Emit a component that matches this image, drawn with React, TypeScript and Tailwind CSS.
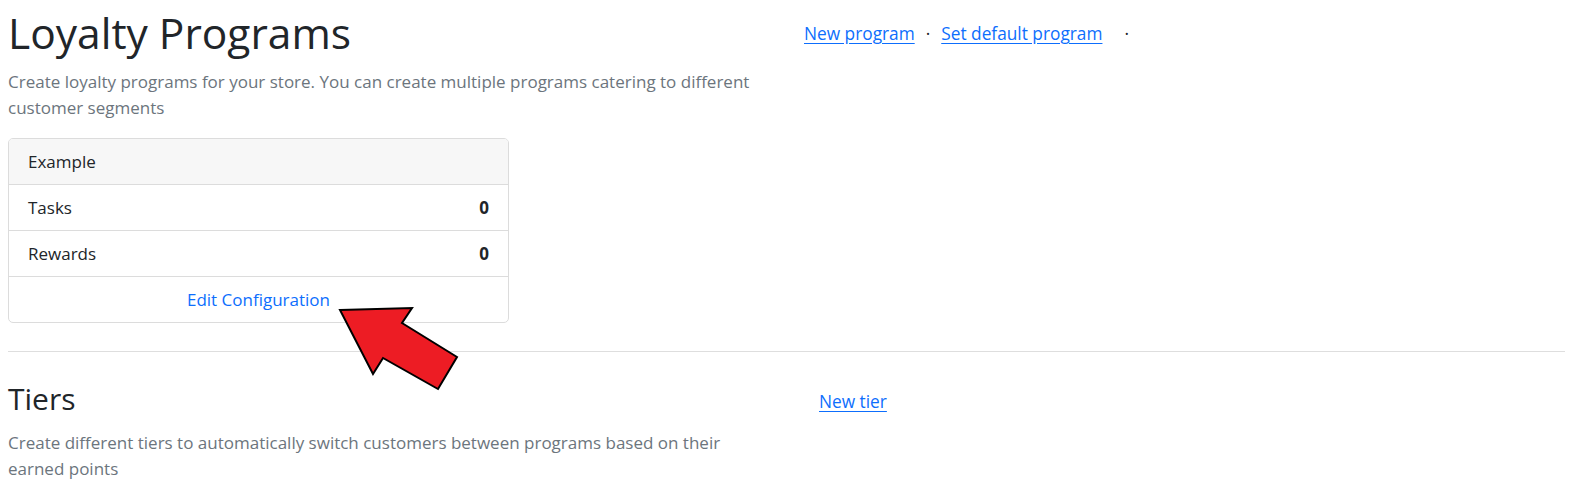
export default function App() {
  return (
    <div className="relative min-h-[496px] bg-white px-2 font-['Open_Sans',sans-serif] text-[#212529]">
      {/* Loyalty programs */}
      <section className="grid grid-cols-[793px_1fr]">
        <div>
          <h1 className="mt-[8px] text-[42.5px] leading-[50px] font-normal">Loyalty Programs</h1>
          <p className="mt-[11px] max-w-[770px] text-[17px] leading-[26px] text-[#6c757d]">
            Create loyalty programs for your store. You can create multiple programs catering to different
            customer segments
          </p>

          <div className="mt-[17px] w-[501px] overflow-hidden rounded-[5px] border border-[#dcdcdc] text-[17px]">
            <div className="flex h-[46px] items-center border-b border-[#dcdcdc] bg-[#f7f7f7] px-[19px]">
              Example
            </div>
            <div className="flex h-[46px] items-center justify-between border-b border-[#dcdcdc] px-[19px]">
              <span>Tasks</span>
              <span className="font-bold">0</span>
            </div>
            <div className="flex h-[46px] items-center justify-between border-b border-[#dcdcdc] px-[19px]">
              <span>Rewards</span>
              <span className="font-bold">0</span>
            </div>
            <div className="flex h-[45px] items-center justify-center">
              <a href="#" className="text-[#0d6efd]">Edit Configuration</a>
            </div>
          </div>
        </div>

        <div className="flex h-[68px] items-center pl-[3px] text-[17.3px] text-[#212529]">
          <a href="#" className="text-[#0d6efd] underline underline-offset-[3px]">New program</a>
          <span className="mx-[11px]">·</span>
          <a href="#" className="text-[#0d6efd] underline underline-offset-[3px]">Set default program</a>
          <span className="ml-[22px]">·</span>
        </div>
      </section>

      <hr className="mt-[28px] border-t border-[#dedede]" />

      {/* Tiers */}
      <section className="grid grid-cols-[793px_1fr]">
        <div>
          <h2 className="mt-[28px] text-[30px] leading-[38px] font-normal">Tiers</h2>
          <p className="mt-[12px] max-w-[770px] text-[17px] leading-[26px] text-[#6c757d]">
            Create different tiers to automatically switch customers between programs based on their
            earned points
          </p>
        </div>
        <div className="pl-[18px] pt-[38px] text-[17.3px] leading-[24px]">
          <a href="#" className="text-[#0d6efd] underline underline-offset-[3px]">New tier</a>
        </div>
      </section>

      {/* annotation arrow */}
      <svg
        className="pointer-events-none absolute left-[330px] top-[300px]"
        width="140"
        height="100"
        viewBox="330 300 140 100"
      >
        <polygon
          points="340,310 412,308 402,323 457,357 438,389 383,358 373,374"
          fill="#ed1c24"
          stroke="#000"
          strokeWidth="2"
          strokeLinejoin="miter"
        />
      </svg>
    </div>
  );
}
